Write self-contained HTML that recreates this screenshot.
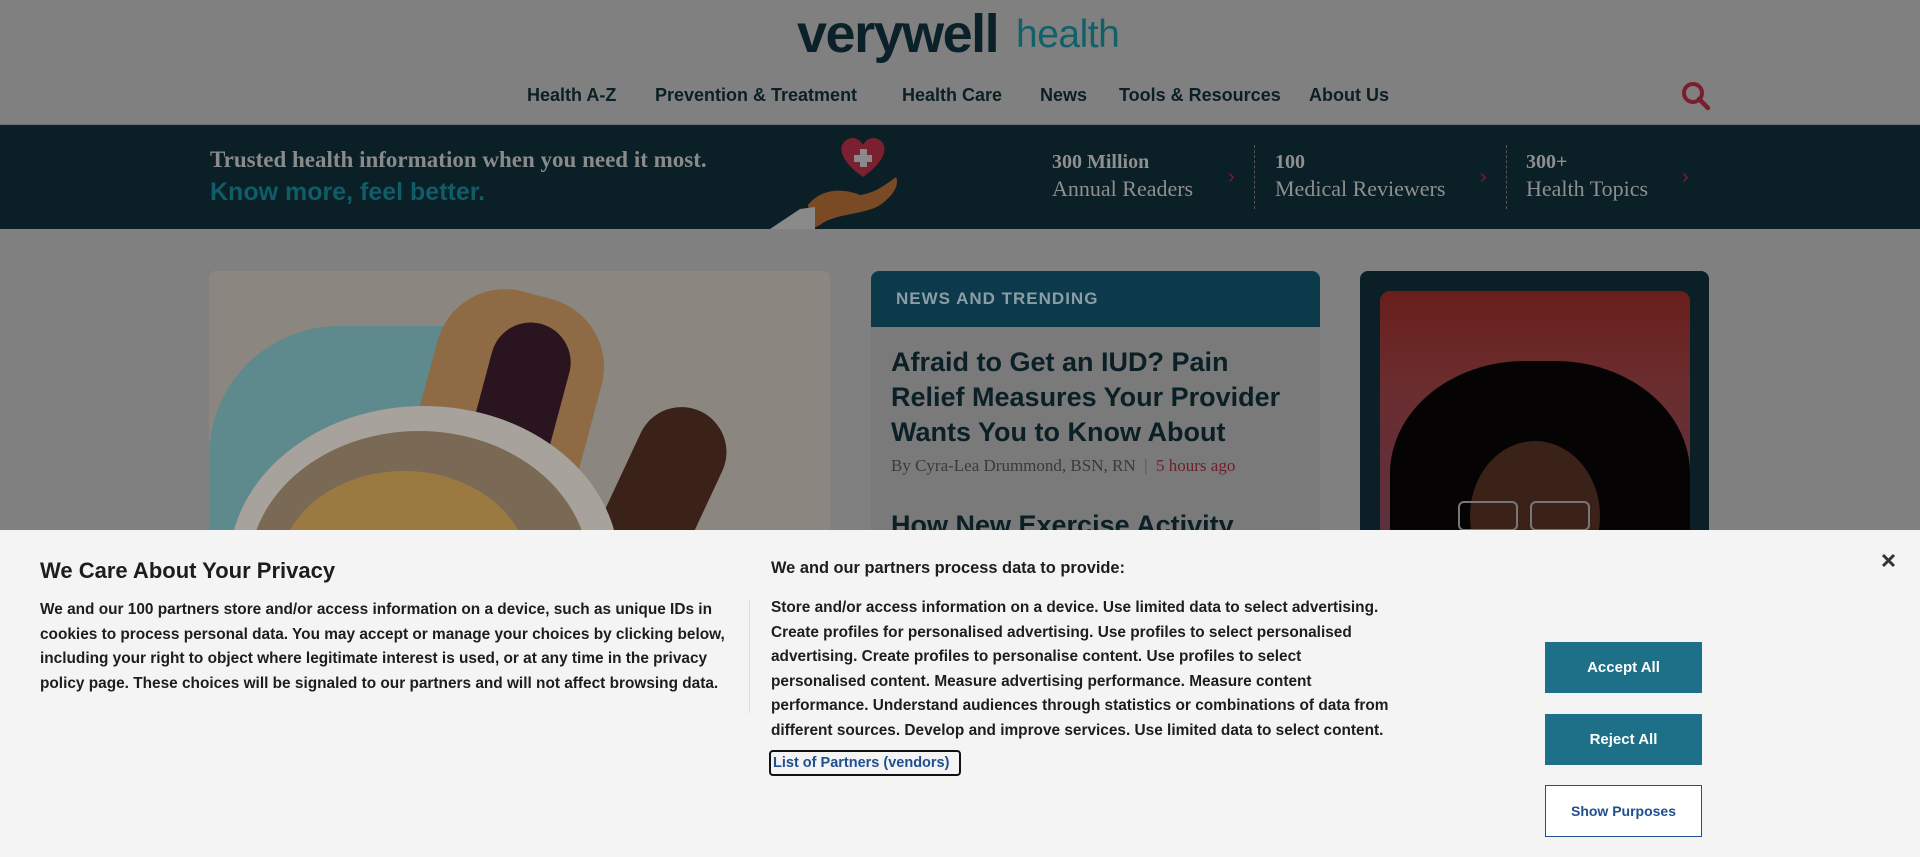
<!DOCTYPE html>
<html><head><meta charset="utf-8"><style>
*{margin:0;padding:0;box-sizing:border-box}
body{width:1920px;height:857px;overflow:hidden;background:#808080;font-family:"Liberation Sans",sans-serif;position:relative}
.a{position:absolute;white-space:nowrap}
.nav{top:85px;font-size:18px;font-weight:bold;color:#0b1f26}
.ser{font-family:"Liberation Serif",serif}
.cp{font-size:15.4px;font-weight:bold;color:#1d1d1d;line-height:24.5px;white-space:nowrap}
.btn{position:absolute;left:1545px;width:157px;height:51px;background:#1e7088;color:#fff;font-weight:bold;font-size:15px;display:flex;align-items:center;justify-content:center}
</style></head><body>
<!-- header -->
<div class="a" style="left:797px;top:3px;font-size:54px;font-weight:bold;color:#0b2129;letter-spacing:-1.5px">verywell</div>
<div class="a" style="left:1016px;top:13px;font-size:39px;color:#11606a;letter-spacing:-0.5px">health</div>
<div class="a nav" style="left:527px">Health A-Z</div>
<div class="a nav" style="left:655px">Prevention &amp; Treatment</div>
<div class="a nav" style="left:902px">Health Care</div>
<div class="a nav" style="left:1040px">News</div>
<div class="a nav" style="left:1119px">Tools &amp; Resources</div>
<div class="a nav" style="left:1309px">About Us</div>
<svg class="a" style="left:1680px;top:80px" width="32" height="32" viewBox="0 0 32 32"><circle cx="13" cy="13" r="9" fill="none" stroke="#7a1d2c" stroke-width="4"/><path d="M19 19l9 9" stroke="#7a1d2c" stroke-width="4.5" stroke-linecap="round"/></svg>
<div class="a" style="left:0;top:124px;width:1920px;height:1px;background:#6e6e6e"></div>
<!-- banner -->
<div class="a" style="left:0;top:125px;width:1920px;height:104px;background:#0a1f26"></div>
<div class="a ser" style="left:210px;top:147px;font-size:23px;font-weight:bold;color:#8a8a8a">Trusted health information when you need it most.</div>
<div class="a" style="left:210px;top:178px;font-size:25px;font-weight:bold;color:#0f5d68">Know more, feel better.</div>
<svg class="a" style="left:760px;top:125px" width="160" height="105" viewBox="0 0 160 105"><path d="M103 52 C80 36 78 22 85 16 C92 10 100 14 103 20 C106 14 114 10 121 16 C128 22 126 36 103 52Z" fill="#7a2030"/><rect x="100" y="24" width="7" height="18" fill="#8a8a8a"/><rect x="94" y="30" width="18" height="7" fill="#8a8a8a"/><path d="M48 80 C60 65 80 62 100 70 C115 68 125 60 136 52 C140 60 132 72 120 80 C105 90 75 88 60 100 L52 104 Z" fill="#7a4a25"/><path d="M10 104 L40 84 L55 82 L55 104Z" fill="#8a8a8a"/></svg>
<div class="a ser" style="left:1052px;top:151px;font-size:20px;font-weight:bold;color:#8f8f8f">300 Million</div>
<div class="a ser" style="left:1052px;top:176px;font-size:22px;color:#8f8f8f">Annual Readers</div>
<div class="a" style="left:1228px;top:166px;color:#7a1d2c;font-size:20px">›</div>
<div class="a" style="left:1254px;top:145px;height:64px;border-left:1px dashed #555"></div>
<div class="a ser" style="left:1275px;top:151px;font-size:20px;font-weight:bold;color:#8f8f8f">100</div>
<div class="a ser" style="left:1275px;top:176px;font-size:22px;color:#8f8f8f">Medical Reviewers</div>
<div class="a" style="left:1480px;top:166px;color:#7a1d2c;font-size:20px">›</div>
<div class="a" style="left:1506px;top:145px;height:64px;border-left:1px dashed #555"></div>
<div class="a ser" style="left:1526px;top:151px;font-size:20px;font-weight:bold;color:#8f8f8f">300+</div>
<div class="a ser" style="left:1526px;top:176px;font-size:22px;color:#8f8f8f">Health Topics</div>
<div class="a" style="left:1682px;top:166px;color:#7a1d2c;font-size:20px">›</div>
<!-- cards -->
<div class="a" style="left:209px;top:271px;width:621px;height:260px;background:#8b8780;overflow:hidden;border-radius:6px 6px 0 0">
<div class="a" style="left:0;top:55px;width:260px;height:400px;border-radius:130px 0 0 0;background:#5e8a8e;left:0"></div>
<div class="a" style="left:210px;top:20px;width:170px;height:260px;border-radius:70px;background:#8e6a45;transform:rotate(15deg)"></div>
<div class="a" style="left:270px;top:50px;width:80px;height:170px;border-radius:40px;background:#2a1420;transform:rotate(15deg)"></div>
<div class="a" style="left:400px;top:130px;width:90px;height:220px;border-radius:45px;background:#3a2218;transform:rotate(25deg)"></div>
<div class="a" style="left:20px;top:135px;width:390px;height:320px;border-radius:50%;background:#a7a29c"></div>
<div class="a" style="left:40px;top:160px;width:340px;height:280px;border-radius:50%;background:#7a6a55"></div>
<div class="a" style="left:70px;top:200px;width:250px;height:200px;border-radius:50%;background:#9a7a40"></div>
</div>
<div class="a" style="left:871px;top:271px;width:449px;height:260px;background:#7a7a7a;border-radius:8px 8px 0 0;overflow:hidden">
<div style="height:56px;background:#0d3a4a;padding:18px 0 0 25px;font-weight:bold;font-size:17px;letter-spacing:1px;color:#8b9ea5">NEWS AND TRENDING</div>
<div style="padding:18px 20px 0 20px;font-size:27px;font-weight:bold;line-height:35px;color:#0b1f26;white-space:normal">Afraid to Get an IUD? Pain Relief Measures Your Provider Wants You to Know About</div>
<div class="ser" style="padding:6px 20px;font-size:17px;color:#3a3a3a">By Cyra-Lea Drummond, BSN, RN <span style="color:#555">&nbsp;|&nbsp;</span> <span style="color:#6e1e28">5 hours ago</span></div>
<div style="padding:28px 20px 0;font-size:27px;font-weight:bold;color:#0b1f26">How New Exercise Activity</div>
</div>
<div class="a" style="left:1360px;top:271px;width:349px;height:260px;background:#0a1f26;border-radius:8px 8px 0 0;overflow:hidden">
<div class="a" style="left:20px;top:20px;width:310px;height:260px;border-radius:10px;background:linear-gradient(180deg,#6a1e1c,#6a2e30 40%,#5a3040);overflow:hidden">
<div class="a" style="left:10px;top:70px;width:300px;height:250px;border-radius:45% 45% 0 0;background:#050303"></div>
<div class="a" style="left:90px;top:150px;width:130px;height:150px;border-radius:50%;background:#3a2218"></div>
<div class="a" style="left:78px;top:210px;width:60px;height:30px;border:2px solid #777;border-radius:6px"></div>
<div class="a" style="left:150px;top:210px;width:60px;height:30px;border:2px solid #777;border-radius:6px"></div>
</div></div>
<!-- consent -->
<div class="a" style="left:0;top:530px;width:1920px;height:327px;background:#f4f4f4"></div>
<div class="a" style="left:40px;top:558px;font-size:22px;font-weight:bold;color:#1d1d1d">We Care About Your Privacy</div>
<div class="a cp" style="left:40px;top:598px">We and our 100 partners store and/or access information on a device, such as unique IDs in<br>cookies to process personal data. You may accept or manage your choices by clicking below,<br>including your right to object where legitimate interest is used, or at any time in the privacy<br>policy page. These choices will be signaled to our partners and will not affect browsing data.</div>
<div class="a" style="left:749px;top:600px;width:1px;height:113px;background:#ddd"></div>
<div class="a" style="left:771px;top:559px;font-size:16.4px;font-weight:bold;color:#1d1d1d">We and our partners process data to provide:</div>
<div class="a cp" style="left:771px;top:596px">Store and/or access information on a device. Use limited data to select advertising.<br>Create profiles for personalised advertising. Use profiles to select personalised<br>advertising. Create profiles to personalise content. Use profiles to select<br>personalised content. Measure advertising performance. Measure content<br>performance. Understand audiences through statistics or combinations of data from<br>different sources. Develop and improve services. Use limited data to select content.</div>
<div class="a" style="left:769px;top:750px;width:192px;height:26px;border:2px solid #111;border-radius:4px;font-size:14.5px;font-weight:bold;color:#1f4f8f;padding:3px 0 0 2px">List of Partners (vendors)</div>
<div class="btn" style="top:642px">Accept All</div>
<div class="btn" style="top:714px">Reject All</div>
<div class="btn" style="top:785px;background:#fff;border:1px solid #1f4f8f;color:#1f4f8f;height:52px;font-size:14px">Show Purposes</div>
<svg class="a" style="left:1881px;top:553px" width="15" height="15" viewBox="0 0 15 15"><path d="M2 2L13 13M13 2L2 13" stroke="#333" stroke-width="3"/></svg>
</body></html>
